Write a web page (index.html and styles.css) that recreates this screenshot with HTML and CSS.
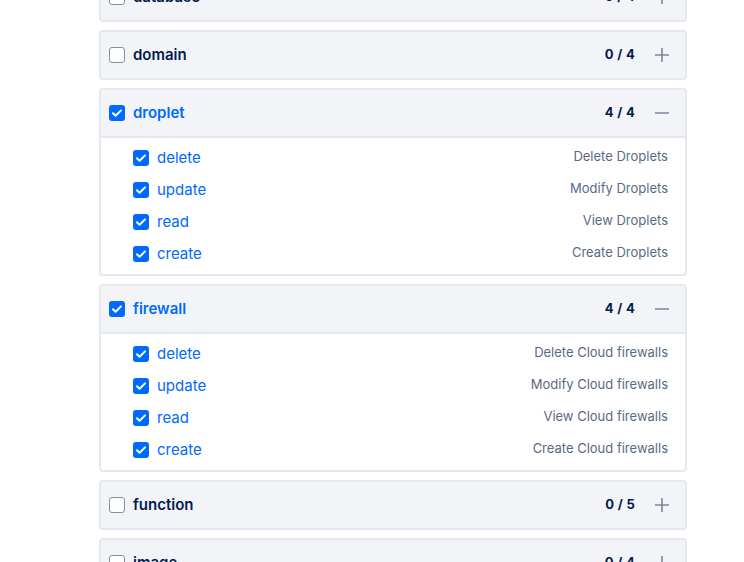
FILE: index.html
```html
<!DOCTYPE html>
<html>
<head>
<meta charset="utf-8">
<link rel="stylesheet" href="styles.css">
</head>
<body>
<div class="list">
  <div class="card">
    <div class="head">
      <span class="box"></span><span class="name">database</span>
      <span class="count">0 / 4</span>
      <svg class="toggle" viewBox="0 0 14 14"><path d="M7 0V14M0 7H14"/></svg>
    </div>
  </div>
  <div class="card">
    <div class="head">
      <span class="box"></span><span class="name">domain</span>
      <span class="count">0 / 4</span>
      <svg class="toggle" viewBox="0 0 14 14"><path d="M7 0V14M0 7H14"/></svg>
    </div>
  </div>
  <div class="card">
    <div class="head">
      <span class="box on"><svg viewBox="0 0 16 16"><path d="M4 8.2l2.6 2.6L12 5.4"/></svg></span><span class="name sel">droplet</span>
      <span class="count">4 / 4</span>
      <svg class="toggle" viewBox="0 0 14 14"><path d="M0 7H14"/></svg>
    </div>
    <div class="body">
      <div class="item"><span class="box on"><svg viewBox="0 0 16 16"><path d="M4 8.2l2.6 2.6L12 5.4"/></svg></span><span class="perm">delete</span><span class="desc">Delete Droplets</span></div>
      <div class="item"><span class="box on"><svg viewBox="0 0 16 16"><path d="M4 8.2l2.6 2.6L12 5.4"/></svg></span><span class="perm">update</span><span class="desc">Modify Droplets</span></div>
      <div class="item"><span class="box on"><svg viewBox="0 0 16 16"><path d="M4 8.2l2.6 2.6L12 5.4"/></svg></span><span class="perm">read</span><span class="desc">View Droplets</span></div>
      <div class="item"><span class="box on"><svg viewBox="0 0 16 16"><path d="M4 8.2l2.6 2.6L12 5.4"/></svg></span><span class="perm">create</span><span class="desc">Create Droplets</span></div>
    </div>
  </div>
  <div class="card">
    <div class="head">
      <span class="box on"><svg viewBox="0 0 16 16"><path d="M4 8.2l2.6 2.6L12 5.4"/></svg></span><span class="name sel">firewall</span>
      <span class="count">4 / 4</span>
      <svg class="toggle" viewBox="0 0 14 14"><path d="M0 7H14"/></svg>
    </div>
    <div class="body">
      <div class="item"><span class="box on"><svg viewBox="0 0 16 16"><path d="M4 8.2l2.6 2.6L12 5.4"/></svg></span><span class="perm">delete</span><span class="desc">Delete Cloud firewalls</span></div>
      <div class="item"><span class="box on"><svg viewBox="0 0 16 16"><path d="M4 8.2l2.6 2.6L12 5.4"/></svg></span><span class="perm">update</span><span class="desc">Modify Cloud firewalls</span></div>
      <div class="item"><span class="box on"><svg viewBox="0 0 16 16"><path d="M4 8.2l2.6 2.6L12 5.4"/></svg></span><span class="perm">read</span><span class="desc">View Cloud firewalls</span></div>
      <div class="item"><span class="box on"><svg viewBox="0 0 16 16"><path d="M4 8.2l2.6 2.6L12 5.4"/></svg></span><span class="perm">create</span><span class="desc">Create Cloud firewalls</span></div>
    </div>
  </div>
  <div class="card">
    <div class="head">
      <span class="box"></span><span class="name">function</span>
      <span class="count">0 / 5</span>
      <svg class="toggle" viewBox="0 0 14 14"><path d="M7 0V14M0 7H14"/></svg>
    </div>
  </div>
  <div class="card">
    <div class="head">
      <span class="box"></span><span class="name">image</span>
      <span class="count">0 / 4</span>
      <svg class="toggle" viewBox="0 0 14 14"><path d="M7 0V14M0 7H14"/></svg>
    </div>
  </div>
</div>
</body>
</html>
```

FILE: styles.css
```css
html, body {
  margin: 0;
  padding: 0;
  background: #ffffff;
  overflow: hidden;
}
body {
  font-family: Inter, "Noto Sans", sans-serif;
  color: #031b4e;
}
.list {
  display: flex;
  flex-direction: column;
  gap: 8px;
  width: 588px;
  margin-left: 99px;
  margin-top: -28px;
}
.card {
  border: 2px solid #e5e8ed;
  border-radius: 4px;
  overflow: hidden;
  background: #ffffff;
}
.head {
  display: flex;
  align-items: center;
  height: 46px;
  padding: 0 16px 0 8px;
  background: #f3f4f7;
}
.box {
  width: 16px;
  height: 16px;
  box-sizing: border-box;
  border: 1.5px solid #8590a6;
  border-radius: 3px;
  background: #ffffff;
  flex: none;
  display: flex;
}
.box.on {
  border: none;
  background: #0069ff;
}
.box svg {
  width: 16px;
  height: 16px;
  fill: none;
  stroke: #ffffff;
  stroke-width: 2;
  stroke-linecap: round;
  stroke-linejoin: round;
}
.name {
  margin-left: 8px;
  margin-top: -2px;
  font-size: 15px;
  font-weight: 600;
  color: #031b4e;
}
.name.sel {
  color: #0069ff;
}
.count {
  margin-left: auto;
  margin-top: -2px;
  font-size: 13px;
  font-weight: 700;
  color: #031b4e;
  letter-spacing: 0.3px;
}
.toggle {
  width: 14px;
  height: 14px;
  margin-left: 20px;
  fill: none;
  stroke: #7a869f;
  stroke-width: 1.6;
}
.body {
  border-top: 2px solid #e5e8ed;
  padding: 4px 17px 4px 32px;
}
.item {
  display: flex;
  align-items: center;
  height: 32px;
}
.perm {
  margin-left: 8px;
  margin-top: -2px;
  font-size: 15px;
  color: #0069ff;
}
.desc {
  margin-left: auto;
  margin-top: -4px;
  font-size: 13px;
  color: #5b6987;
}
```
